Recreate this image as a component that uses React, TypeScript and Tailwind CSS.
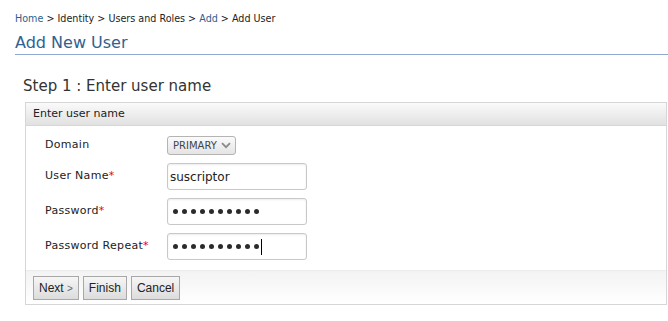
import React from 'react';

const font = { fontFamily: '"DejaVu Sans", sans-serif' };

function Dots({ caret }: { caret?: boolean }) {
    return (
        <div className="flex items-center gap-[4px] pl-[3px]">
            {Array.from({ length: 10 }).map((_, i) => (
                <span key={i} className="block w-[5px] h-[5px] rounded-full bg-[#2b2b2b]" />
            ))}
            {caret && <span className="block w-px h-[16px] bg-black -ml-[2px]" />}
        </div>
    );
}

function Field({ children }: { children: React.ReactNode }) {
    return (
        <div className="w-[140px] h-[27px] border border-[#c8c8c8] rounded-[3px] bg-white shadow-[inset_0_1px_2px_rgba(0,0,0,0.08)] flex items-center px-[2px] text-[12px] text-[#222]">
            {children}
        </div>
    );
}

function Label({ text, required }: { text: string; required?: boolean }) {
    return (
        <div className="w-[122px] text-[11px] tracking-[0.3px] text-[#222]">
            {text}
            {required && <span className="text-[#e00]">*</span>}
        </div>
    );
}

function Btn({ children }: { children: React.ReactNode }) {
    return (
        <button
            className="h-[24px] px-[5px] border border-[#a8a8a8] bg-gradient-to-b from-[#f6f6f6] to-[#dcdcdc] text-[12px] text-[#222] leading-none"
            style={{ fontFamily: '"Liberation Sans", Arial, sans-serif' }}
        >
            {children}
        </button>
    );
}

export default function App() {
    return (
        <div className="w-[668px] h-[321px] bg-white overflow-hidden" style={font}>
            {/* Breadcrumb */}
            <div className="pl-[15px] pt-[13px] text-[9.6px] text-[#222] leading-[12px]">
                <span className="text-[#2c5f8f]">Home</span> &gt; Identity &gt; Users and Roles &gt;{' '}
                <span className="text-[#2c5f8f]">Add</span> &gt; Add User
            </div>

            {/* Title */}
            <div className="ml-[15px] mt-[8px] border-b border-[#8fa8d0] pb-[1px]">
                <h1 className="text-[16px] leading-[20px] text-[#2e6290]">Add New User</h1>
            </div>

            <h2 className="ml-[23px] mt-[22px] text-[15px] leading-[18px] text-[#333]">Step 1 : Enter user name</h2>

            {/* Box */}
            <div className="ml-[25px] mr-px mt-[7px] border border-[#d6d6d6]">
                <div className="h-[23px] flex items-center pl-[7px] text-[11px] text-[#222] bg-gradient-to-b from-[#fafafa] to-[#e1e1e1] border-b border-[#d6d6d6]">
                    Enter user name
                </div>

                <div className="pl-[19px] pt-[10px] pb-[10px] flex flex-col gap-[8px]">
                    <div className="flex items-center h-[19px]">
                        <Label text="Domain" />
                        <div className="h-[19px] w-[69px] border border-[#b4b4b4] rounded-[3px] bg-gradient-to-b from-[#fbfbfb] to-[#e4e4e4] flex items-center pl-[5px] gap-[4px] text-[10px] text-[#444]">
                            PRIMARY
                            <svg width="10" height="7" viewBox="0 0 10 7">
                                <path d="M1 1.2 L5 5.2 L9 1.2" stroke="#8a8a8a" strokeWidth="1.8" fill="none" />
                            </svg>
                        </div>
                    </div>
                    <div className="flex items-center">
                        <Label text="User Name" required />
                        <Field>suscriptor</Field>
                    </div>
                    <div className="flex items-center">
                        <Label text="Password" required />
                        <Field>
                            <Dots />
                        </Field>
                    </div>
                    <div className="flex items-center">
                        <Label text="Password Repeat" required />
                        <Field>
                            <Dots caret />
                        </Field>
                    </div>
                </div>

                {/* Toolbar */}
                <div className="border-t border-[#ececec] bg-gradient-to-b from-[#f3f3f3] to-white pl-[7px] pt-[5px] pb-[4px] flex gap-[4px]">
                    <Btn>
                        Next <span className="text-[10px] text-[#666]">&gt;</span>
                    </Btn>
                    <Btn>Finish</Btn>
                    <Btn>Cancel</Btn>
                </div>
            </div>
        </div>
    );
}
